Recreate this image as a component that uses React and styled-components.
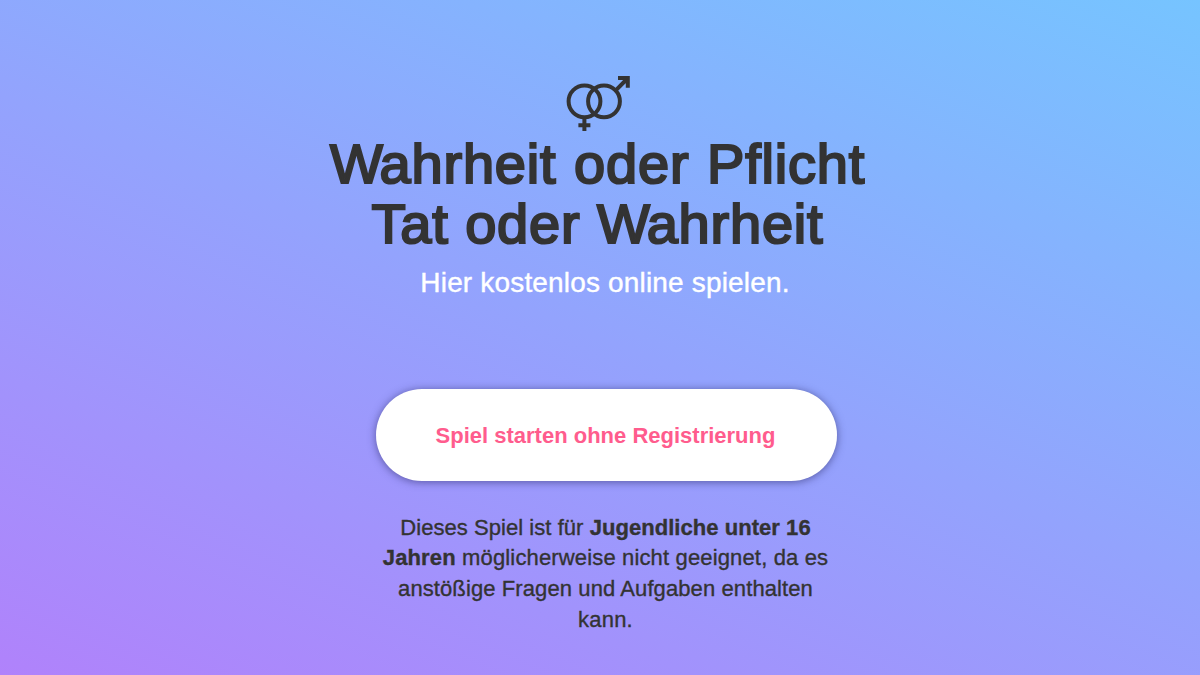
import React from "react";
import styled, { createGlobalStyle } from "styled-components";

const GlobalStyle = createGlobalStyle`
  * { box-sizing: border-box; }
  body {
    margin: 0;
    font-family: "Liberation Sans", Arial, sans-serif;
    color: #333;
  }
`;

const Page = styled.main`
  display: flex;
  flex-direction: column;
  align-items: center;
  width: 100%;
  height: 675px;
  padding: 75px 0 0;
  overflow: hidden;
  text-align: center;
  background: linear-gradient(22deg, #b082fb, #76c4ff);
`;

const GenderIcon = styled.svg`
  display: block;
  width: 66px;
  height: 58px;
  margin-right: 4px;
  fill: none;
  stroke: #333;
  stroke-width: 4;
`;

const Title = styled.h1`
  margin: 1px 5px 0 0;
  font-size: 56px;
  font-weight: 400;
  line-height: 60px;
  white-space: nowrap;
  -webkit-text-stroke: 2.2px #333;
`;

const Line = styled.span`
  display: block;
  letter-spacing: ${(p) => p.$spacing}px;
  word-spacing: ${(p) => p.$words || 0}px;
`;

const Kern = styled.span`
  letter-spacing: ${(p) => p.$by}px;
`;

const Subtitle = styled.p`
  margin: 12px 0 0 10px;
  font-size: 28px;
  line-height: 34px;
  letter-spacing: 0.17px;
  color: #fff;
  -webkit-text-stroke: 0.4px #fff;
`;

const StartButton = styled.button`
  width: 461px;
  height: 92px;
  margin: 89px 0 0 13px;
  padding: 1px 2px 0 0;
  border: 0;
  border-radius: 46px;
  background: #fff;
  box-shadow: 0 1px 8px rgba(40, 40, 100, 0.6);
  font: bold 22px "Liberation Sans", Arial, sans-serif;
  letter-spacing: 0;
  color: #ff5c8d;
`;

const Notice = styled.p`
  margin: 31.6px 0 0 11px;
  font-size: 22px;
  line-height: 30.8px;
  white-space: nowrap;
  -webkit-text-stroke: 0.35px #333;
`;

export default function App() {
  return (
    <>
      <GlobalStyle />
      <Page>
        <GenderIcon viewBox="0 0 66 58" aria-hidden="true">
          <circle cx="19.5" cy="26.3" r="15.9" />
          <circle cx="39" cy="26.3" r="15.9" />
          <path d="M19.4 42.2V56M13.4 50.3h12M50.5 15.7 62 4M53 3h9.8v9.8" />
        </GenderIcon>
        <Title>
          <Line $spacing={0.8} $words={1.3}><Kern $by={-3.2}>W</Kern>ahrheit oder Pflicht</Line>
          <Line $spacing={0.8} $words={0.2}><Kern $by={-5.5}>T</Kern>at oder <Kern $by={-3.2}>W</Kern>ahrheit</Line>
        </Title>
        <Subtitle>Hier kostenlos online spielen.</Subtitle>
        <StartButton>Spiel starten ohne Registrierung</StartButton>
        <Notice>
          <Line $spacing={0.05}>Dieses Spiel ist für <strong>Jugendliche unter 16</strong></Line>
          <Line $spacing={0.15}><strong>Jahren</strong> möglicherweise nicht geeignet, da es</Line>
          <Line $spacing={0.1}>anstößige Fragen und Aufgaben enthalten</Line>
          <Line $spacing={0.2}>kann.</Line>
        </Notice>
      </Page>
    </>
  );
}
